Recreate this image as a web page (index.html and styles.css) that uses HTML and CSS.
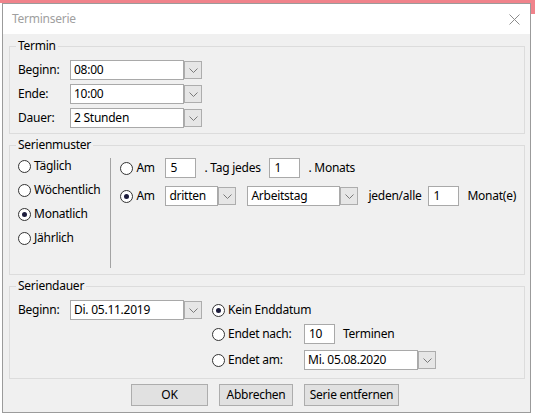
FILE: index.html
```html
<!DOCTYPE html>
<html>
<head>
    <title>Terminserie</title>
    <link rel="stylesheet" href="styles.css">
</head>
<body>
    <div class="dialog">
        <div class="titlebar">
            <span class="title">Terminserie</span>
            <svg class="close" width="11" height="11" viewBox="0 0 11 11">
                <path d="M0.5 0.5 L10.5 10.5 M10.5 0.5 L0.5 10.5" stroke="#8c8c8c" stroke-width="1"/>
            </svg>
        </div>

        <div class="content">
            <fieldset class="group termin">
                <legend>Termin</legend>
                <div class="row">
                    <span class="label">Beginn:</span>
                    <div class="combo">
                        <span class="field date">08:00</span>
                        <span class="drop"><svg width="9" height="5" viewBox="0 0 9 5"><polyline points="0.5,0.5 4.5,4.5 8.5,0.5" fill="none" stroke="#7a7a7a"/></svg></span>
                    </div>
                </div>
                <div class="row">
                    <span class="label">Ende:</span>
                    <div class="combo">
                        <span class="field date">10:00</span>
                        <span class="drop"><svg width="9" height="5" viewBox="0 0 9 5"><polyline points="0.5,0.5 4.5,4.5 8.5,0.5" fill="none" stroke="#7a7a7a"/></svg></span>
                    </div>
                </div>
                <div class="row">
                    <span class="label">Dauer:</span>
                    <div class="combo">
                        <span class="field date">2 Stunden</span>
                        <span class="drop"><svg width="9" height="5" viewBox="0 0 9 5"><polyline points="0.5,0.5 4.5,4.5 8.5,0.5" fill="none" stroke="#7a7a7a"/></svg></span>
                    </div>
                </div>
            </fieldset>

            <fieldset class="group muster">
                <legend>Serienmuster</legend>
                <div class="muster-body">
                    <div class="freq">
                        <label class="opt"><span class="radio"></span>Täglich</label>
                        <label class="opt"><span class="radio"></span>Wöchentlich</label>
                        <label class="opt"><span class="radio on"></span>Monatlich</label>
                        <label class="opt"><span class="radio"></span>Jährlich</label>
                    </div>
                    <div class="sep"></div>
                    <div class="monthly">
                        <div class="row">
                            <label class="opt am"><span class="radio"></span>Am</label>
                            <span class="field num">5</span>
                            <span class="txt tag">. Tag jedes</span>
                            <span class="field num">1</span>
                            <span class="txt">. Monats</span>
                        </div>
                        <div class="row">
                            <label class="opt am"><span class="radio on"></span>Am</label>
                            <div class="combo">
                                <span class="field nth">dritten</span>
                                <span class="drop"><svg width="9" height="5" viewBox="0 0 9 5"><polyline points="0.5,0.5 4.5,4.5 8.5,0.5" fill="none" stroke="#7a7a7a"/></svg></span>
                            </div>
                            <div class="combo day">
                                <span class="field weekday">Arbeitstag</span>
                                <span class="drop"><svg width="9" height="5" viewBox="0 0 9 5"><polyline points="0.5,0.5 4.5,4.5 8.5,0.5" fill="none" stroke="#7a7a7a"/></svg></span>
                            </div>
                            <span class="txt every">jeden/alle</span>
                            <span class="field num">1</span>
                            <span class="txt">Monat(e)</span>
                        </div>
                    </div>
                </div>
            </fieldset>

            <fieldset class="group dauer">
                <legend>Seriendauer</legend>
                <div class="dauer-body">
                    <div class="row">
                        <span class="label">Beginn:</span>
                        <div class="combo">
                            <span class="field date">Di. 05.11.2019</span>
                            <span class="drop"><svg width="9" height="5" viewBox="0 0 9 5"><polyline points="0.5,0.5 4.5,4.5 8.5,0.5" fill="none" stroke="#7a7a7a"/></svg></span>
                        </div>
                    </div>
                    <div class="ends">
                        <div class="row">
                            <label class="opt"><span class="radio on"></span>Kein Enddatum</label>
                        </div>
                        <div class="row">
                            <label class="opt end"><span class="radio"></span>Endet nach:</label>
                            <span class="field num">10</span>
                            <span class="txt">Terminen</span>
                        </div>
                        <div class="row last">
                            <label class="opt end"><span class="radio"></span>Endet am:</label>
                            <div class="combo">
                                <span class="field date">Mi. 05.08.2020</span>
                                <span class="drop"><svg width="9" height="5" viewBox="0 0 9 5"><polyline points="0.5,0.5 4.5,4.5 8.5,0.5" fill="none" stroke="#7a7a7a"/></svg></span>
                            </div>
                        </div>
                    </div>
                </div>
            </fieldset>

            <div class="buttons">
                <button class="btn ok">OK</button>
                <button class="btn cancel">Abbrechen</button>
                <button class="btn remove">Serie entfernen</button>
            </div>
        </div>
    </div>
</body>
</html>
```

FILE: styles.css
```css
html {
    background:
        linear-gradient(#f0838b, #f0838b) 0 0 / 100% 3px no-repeat,
        linear-gradient(#f0838b, #f0838b) right 0 top 0 / 4px 14px no-repeat,
        #fff;
}
body {
    margin: 0;
    padding: 3px 0 0 2px;
    font-family: "Noto Sans", sans-serif;
    font-size: 12px;
    line-height: 16px;
    letter-spacing: -0.25px;
    color: #000;
}
.dialog {
    width: 529px;
    height: 410px;
    box-sizing: border-box;
    border: 1px solid #9b9b9b;
    background: #f0f0f0;
}
.titlebar {
    height: 30px;
    background: #fff;
    display: flex;
    align-items: center;
    justify-content: space-between;
    padding: 0 10px 0 9px;
}
.title {
    color: #a0a0a0;
}
.content {
    padding: 0 5px 0 6px;
}
.group {
    margin: 4px 0 0;
    padding: 6px 8px 5px;
    border: 1px solid #dcdcdc;
    min-width: 0;
}
.group legend {
    padding: 0 2px;
    margin-left: -2px;
    line-height: 16px;
}
.muster,
.dauer {
    margin-top: 3px;
}
.row {
    display: flex;
    align-items: center;
    height: 20px;
}
.termin .row + .row {
    margin-top: 4px;
}
.label {
    width: 52px;
}
.combo {
    display: flex;
    align-items: flex-start;
    height: 20px;
}
.field {
    box-sizing: border-box;
    height: 20px;
    border: 1px solid #a9a9a9;
    background: #fff;
    padding: 0 3px;
    line-height: 18px;
    white-space: nowrap;
}
.field.date {
    width: 114px;
}
.field.num {
    width: 31px;
    padding-left: 4px;
}
.field.nth {
    width: 53px;
}
.field.weekday {
    width: 93px;
}
.drop {
    box-sizing: border-box;
    width: 18px;
    height: 18px;
    margin-top: 1px;
    border: 1px solid #adadad;
    background: #e6e6e6;
    display: flex;
    align-items: center;
    justify-content: center;
}
.opt {
    display: flex;
    align-items: center;
    gap: 3px;
    height: 20px;
    white-space: nowrap;
}
.radio {
    box-sizing: border-box;
    width: 13px;
    height: 13px;
    border: 1px solid #333;
    border-radius: 50%;
    background: #fff;
    display: flex;
    align-items: center;
    justify-content: center;
    flex: none;
}
.radio.on::after {
    content: "";
    width: 5px;
    height: 5px;
    border-radius: 50%;
    background: #1c1c3c;
}
.txt {
    padding-left: 8px;
    white-space: nowrap;
}

/* Serienmuster */
.muster {
    padding: 3px 8px 6px;
}
.muster-body {
    display: flex;
    align-items: flex-start;
}
.freq {
    width: 95px;
    display: flex;
    flex-direction: column;
    gap: 4px;
}
.sep {
    width: 1px;
    height: 110px;
    margin-top: 2px;
    background: #a3a3a3;
}
.monthly {
    margin-left: 9px;
    padding-top: 2px;
    display: flex;
    flex-direction: column;
    gap: 8px;
}
.opt.am {
    width: 45px;
}
.txt.tag {
    box-sizing: border-box;
    width: 73px;
}
.combo.day {
    margin-left: 11px;
}
.txt.every {
    box-sizing: border-box;
    width: 70px;
    padding-left: 10px;
}

/* Seriendauer */
.dauer {
    padding: 6px 8px 8px;
}
.dauer-body {
    display: flex;
    align-items: flex-start;
}
.ends {
    margin-left: 10px;
    display: flex;
    flex-direction: column;
    gap: 4px;
}
.ends .last {
    margin-top: 2px;
}
.opt.end {
    width: 92px;
}

.buttons {
    display: flex;
    justify-content: center;
    gap: 11px;
    margin-top: 5px;
    padding-right: 4px;
}
.btn {
    height: 22px;
    border: 1px solid #adadad;
    background: #e1e1e1;
    font: inherit;
    letter-spacing: inherit;
    color: #000;
    padding: 0;
}
.btn.ok {
    width: 77px;
}
.btn.cancel {
    width: 74px;
}
.btn.remove {
    width: 95px;
}
```
